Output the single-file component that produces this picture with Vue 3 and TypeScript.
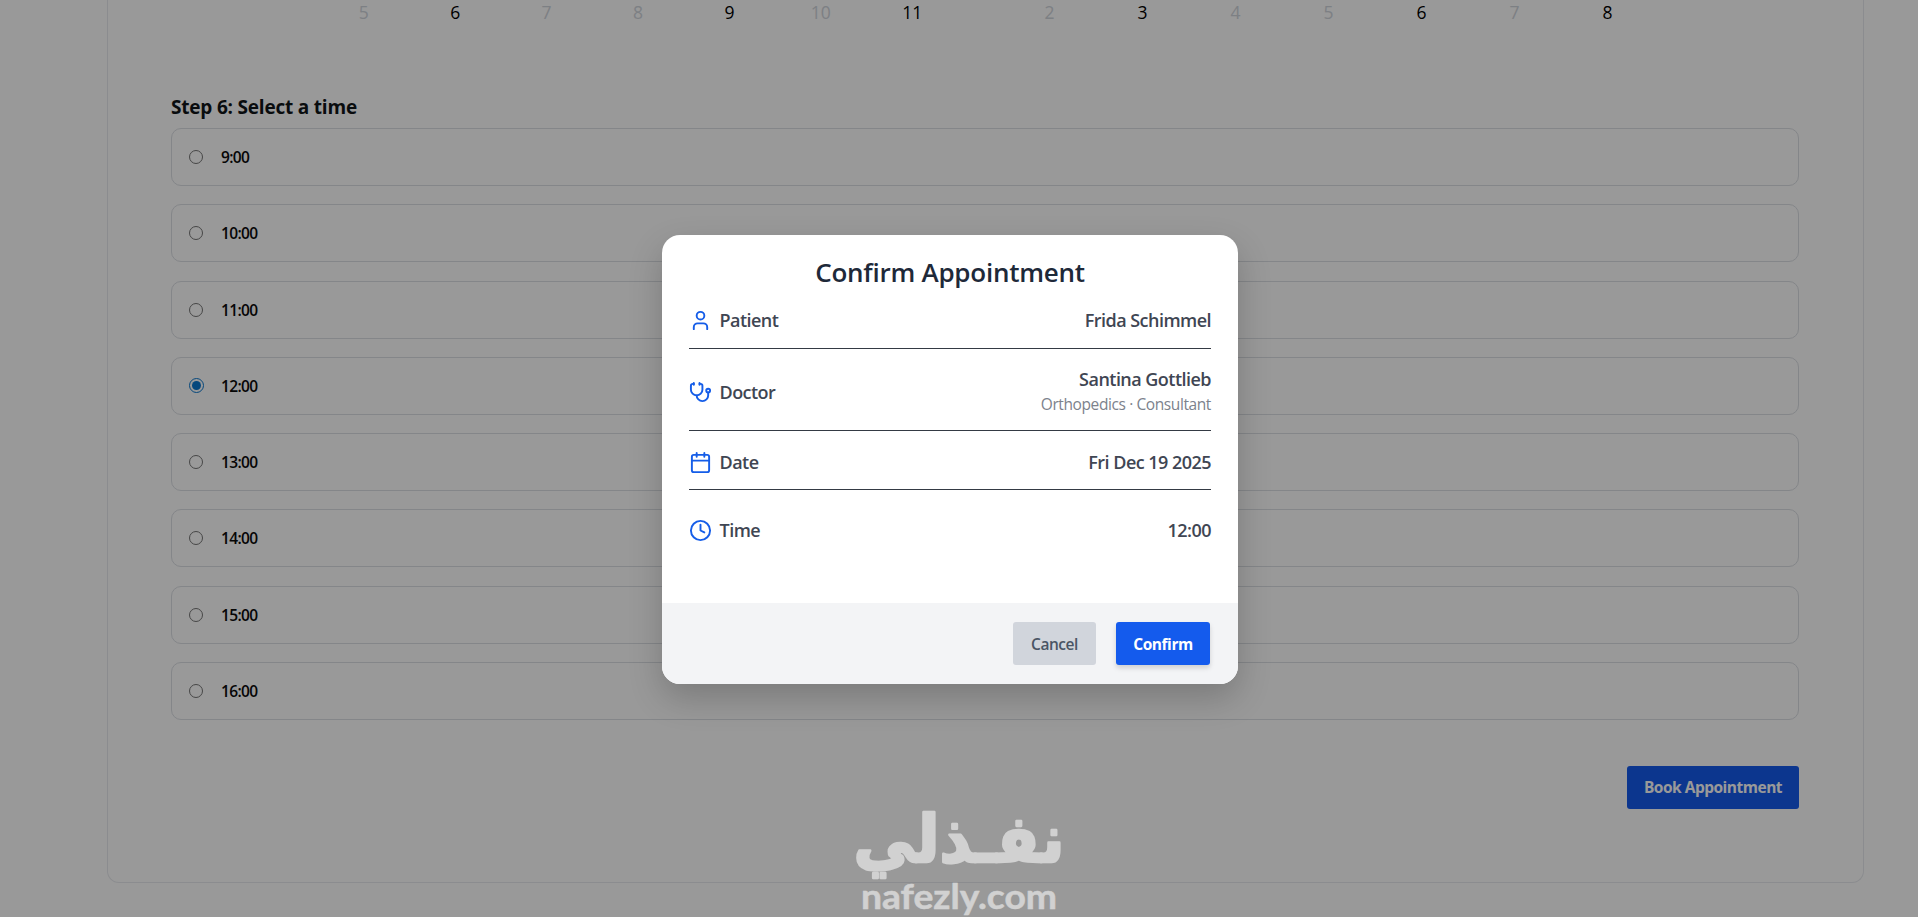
<template>
  <div class="page">
    <div class="booking-card">
      <div class="calendars">
        <div v-for="(month, i) in months" :key="i" class="week">
          <span v-for="d in month" :key="d.day" class="day" :class="{ disabled: !d.open }">{{ d.day }}</span>
        </div>
      </div>

      <h3 class="step-title">Step 6: Select a time</h3>
      <div class="slots">
        <label v-for="slot in slots" :key="slot" class="slot" @click="selected = slot">
          <span class="radio" :class="{ checked: slot === selected }"></span>
          <span class="slot-label">{{ slot }}</span>
        </label>
      </div>

      <div class="actions">
        <button class="btn btn-book" @click="open = true">Book Appointment</button>
      </div>
    </div>

    <div v-if="open" class="overlay">
      <div class="modal">
        <div class="modal-body">
          <h2 class="modal-title"><span>Confirm Appointment</span></h2>
          <div v-for="row in rows" :key="row.label" class="row" :class="row.label.toLowerCase()">
            <div class="row-label">
              <svg class="icon" viewBox="0 0 24 24">
                <path v-for="p in row.icon" :key="p" :d="p" />
              </svg>
              <span>{{ row.label }}</span>
            </div>
            <div class="row-value">
              <div>{{ row.value }}</div>
              <div v-if="row.note" class="note">{{ row.note }}</div>
            </div>
          </div>
        </div>
        <div class="modal-footer">
          <button class="btn btn-cancel" @click="open = false">Cancel</button>
          <button class="btn btn-confirm">Confirm</button>
        </div>
      </div>
    </div>

    <svg class="watermark" viewBox="0 0 220 117">
      <g transform="translate(109 62) scale(1 1.06)">
        <text class="wm-ar" x="0" y="0" text-anchor="middle">نفـذلي</text>
      </g>
      <text class="wm-en" x="11" y="109" textLength="196" lengthAdjust="spacingAndGlyphs">nafezly.com</text>
    </svg>
  </div>
</template>

<script setup lang="ts">
import { computed, ref } from 'vue'

interface Day {
  day: number
  open: boolean
}

interface Row {
  label: string
  value: string
  note?: string
  icon: string[]
}

const makeWeek = (start: number, openDays: number[]): Day[] =>
  Array.from({ length: 7 }, (_, i) => ({ day: start + i, open: openDays.includes(start + i) }))

const months: Day[][] = [makeWeek(5, [6, 9, 11]), makeWeek(2, [3, 6, 8])]

const slots = ['9:00', '10:00', '11:00', '12:00', '13:00', '14:00', '15:00', '16:00']
const selected = ref('12:00')
const open = ref(true)

const rows = computed<Row[]>(() => [
  {
    label: 'Patient',
    value: 'Frida Schimmel',
    icon: ['M19 21v-2a4 4 0 0 0-4-4H9a4 4 0 0 0-4 4v2', 'M8 7a4 4 0 1 0 8 0a4 4 0 1 0-8 0']
  },
  {
    label: 'Doctor',
    value: 'Santina Gottlieb',
    note: 'Orthopedics · Consultant',
    icon: [
      'M11 2v2',
      'M5 2v2',
      'M5 3H4a2 2 0 0 0-2 2v4a6 6 0 0 0 12 0V5a2 2 0 0 0-2-2h-1',
      'M8 15a6 6 0 0 0 12 0v-3',
      'M18 10a2 2 0 1 0 4 0a2 2 0 1 0-4 0'
    ]
  },
  {
    label: 'Date',
    value: 'Fri Dec 19 2025',
    icon: [
      'M8 2v4',
      'M16 2v4',
      'M5 4h14a2 2 0 0 1 2 2v14a2 2 0 0 1-2 2H5a2 2 0 0 1-2-2V6a2 2 0 0 1 2-2z',
      'M3 10h18'
    ]
  },
  {
    label: 'Time',
    value: selected.value,
    icon: ['M2 12a10 10 0 1 0 20 0a10 10 0 1 0-20 0', 'M12 6v6l4 2']
  }
])
</script>

<style>
body {
  margin: 0;
  background: #fff;
  overflow: hidden;
}
</style>

<style scoped>
.page {
  position: relative;
  height: 917px;
  overflow: hidden;
  font-family: "Segoe UI", "Open Sans", "Noto Sans", sans-serif;
}

.page * {
  box-sizing: border-box;
}

.booking-card {
  width: 1757px;
  height: 883px;
  margin-left: 107px;
  padding: 0 64px 0 63px;
  border: 1px solid #e8eaee;
  border-top: 0;
  border-radius: 0 0 12px 12px;
}

.calendars {
  display: grid;
  grid-template-columns: 640px 651px;
  column-gap: 45px;
  height: 94px;
  padding-left: 147px;
}

.week {
  display: grid;
  grid-template-columns: repeat(7, 1fr);
}

.day {
  font-size: 17.5px;
  line-height: 24px;
  text-align: center;
  color: #000;
}

.day.disabled {
  color: #d1d5dc;
}

.step-title {
  margin: 0;
  height: 34px;
  font-size: 19px;
  line-height: 27px;
  font-weight: 700;
  letter-spacing: -0.2px;
  color: #101418;
}

.slots {
  display: flex;
  flex-direction: column;
  gap: 18.25px;
}

.slot {
  display: flex;
  align-items: center;
  height: 58px;
  padding-left: 16px;
  border: 1px solid #dcdfe4;
  border-radius: 10px;
}

.radio {
  display: flex;
  width: 14px;
  height: 14px;
  margin: 0 18px 0 1px;
  border: 1px solid #767676;
  border-radius: 50%;
}

.radio.checked {
  width: 15px;
  height: 15px;
  margin: 0 17.5px 0 0.5px;
  padding: 2px;
  border-color: #0b78d0;
}

.radio.checked::before {
  content: "";
  flex: 1;
  border-radius: 50%;
  background: #0b78d0;
}

.slot-label {
  font-size: 15.5px;
  font-weight: 600;
  letter-spacing: -0.65px;
  color: #0a0a0a;
}

.actions {
  display: flex;
  justify-content: flex-end;
  margin-top: 46px;
}

.btn {
  height: 43px;
  padding: 0;
  border: 0;
  border-radius: 3px;
  font-family: inherit;
  font-size: 15.5px;
  font-weight: 700;
  letter-spacing: -0.45px;
  color: #fff;
  background: #145bed;
}

.btn-book {
  width: 172px;
  letter-spacing: -0.5px;
}

.overlay {
  position: absolute;
  inset: 0;
  padding: 235px 0 0 662px;
  background: rgba(0, 0, 0, 0.4);
}

.modal {
  width: 576px;
  height: 449px;
  border-radius: 18px;
  overflow: hidden;
  background: #fff;
  box-shadow: 0 14px 34px rgba(0, 0, 0, 0.2);
}

.modal-body {
  height: 368px;
  padding: 18px 27px 0;
}

.modal-title {
  margin: 0;
  height: 40px;
  font-size: 26px;
  line-height: 38px;
  font-weight: 600;
  letter-spacing: -0.25px;
  text-align: center;
  color: #1e2939;
}

.row {
  display: flex;
  justify-content: space-between;
  align-items: center;
  border-bottom: 1px solid #343a44;
  font-size: 18px;
  font-weight: 600;
  line-height: 25px;
  letter-spacing: -0.53px;
  color: #3f4653;
}

.row.patient {
  height: 56px;
}

.row.doctor {
  height: 82px;
  padding-top: 5px;
}

.row.date {
  height: 59px;
  padding-top: 5px;
}

.row.time {
  height: 80px;
  border-bottom: 0;
}

.row-label {
  display: flex;
  align-items: center;
  gap: 8px;
}

.row-value {
  text-align: right;
}

.note {
  font-size: 15.5px;
  font-weight: 400;
  letter-spacing: -0.4px;
  color: #7c828c;
}

.icon {
  width: 23px;
  height: 23px;
  margin-left: -0.5px;
  fill: none;
  stroke: #155de8;
  stroke-width: 2;
  stroke-linecap: round;
  stroke-linejoin: round;
}

.modal-footer {
  display: flex;
  justify-content: flex-end;
  gap: 20px;
  height: 81px;
  padding: 19px 28px 0;
  background: #f3f4f6;
}

.btn-cancel {
  width: 83px;
  font-weight: 600;
  color: #4a5565;
  background: #d1d5dc;
}

.btn-confirm {
  width: 94px;
  box-shadow: 0 3px 5px rgba(0, 0, 0, 0.15);
}

.watermark {
  position: absolute;
  left: 850px;
  top: 800px;
  width: 220px;
  height: 117px;
  overflow: visible;
  fill: #fff;
  stroke: #fff;
  stroke-linejoin: round;
  opacity: 0.55;
}

.wm-ar {
  font: 700 62px "DejaVu Sans", sans-serif;
  stroke-width: 2.5;
}

.wm-en {
  font: 700 34px Lato, sans-serif;
  stroke-width: 0.5;
}
</style>
